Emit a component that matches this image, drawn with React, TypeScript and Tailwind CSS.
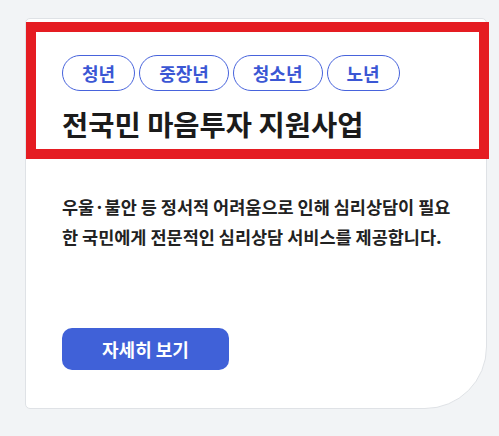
import React from 'react';

const tags = ['청년', '중장년', '청소년', '노년'];

export default function App() {
  return (
    <div
      className="w-[499px] h-[436px] bg-[#f2f4f6] pt-[18px] pl-[25px]"
      style={{ fontFamily: '"Noto Sans CJK KR", "Noto Sans", sans-serif' }}
    >
      <div className="w-[462px] h-[391px] bg-white border border-[#dfe2e6] rounded-[5px] rounded-br-[62px] flex flex-col">
        {/* Header (highlighted) */}
        <div className="mt-[3px] -mr-[3px] border-[10px] border-[#e51c22] bg-white pl-[26px] pt-[23px] pb-[5px]">
          <div className="flex gap-[4px]">
            {tags.map((t) => (
              <span
                key={t}
                className="h-[36px] px-[19px] flex items-center rounded-full border border-[#4763dc] text-[#3b57d4] text-[18px] font-semibold"
              >
                {t}
              </span>
            ))}
          </div>
          <h2 className="mt-[13px] text-[28.5px] leading-[40px] font-bold text-[#1b1b1b]">
            전국민 마음투자 지원사업
          </h2>
        </div>

        {/* Body */}
        <div className="pl-[36px] pt-[33px] flex-1 flex flex-col">
          <p className="w-[396px] break-all text-[17.5px] leading-[30px] font-semibold text-[#222]">
            우울·불안 등 정서적 어려움으로 인해 심리상담이 필요한 국민에게 전문적인 심리상담 서비스를 제공합니다.
          </p>
          <button className="mt-auto mb-[38px] w-[167px] h-[42px] rounded-[10px] bg-[#4061d8] text-white text-[18px] font-bold">
            자세히 보기
          </button>
        </div>
      </div>
    </div>
  );
}
